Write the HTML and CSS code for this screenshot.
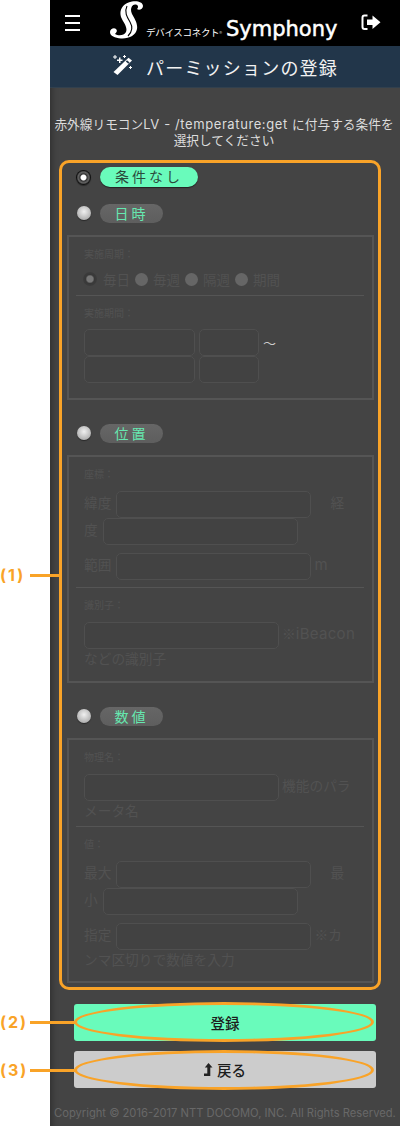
FILE: index.html
```html
<!DOCTYPE html>
<html lang="ja">
<head>
  <meta charset="UTF-8">
  <meta name="viewport" content="width=device-width, initial-scale=1">
  <title>パーミッションの登録</title>
  <link rel="stylesheet" href="styles.css">
</head>
<body>
  <div class="page">
    <header class="topbar">
      <div class="menu"><span></span><span></span><span></span></div>
      <div class="logo">
        <svg class="logo-s" width="34" height="39" viewBox="0 0 34 39">
          <path fill="#fff" d="M22 0.500C27 -0.500 33 1 33 5C33 8 29 10 27 8C29 6 28 3 25 3.500C21 4 20 9 22 13C24 17 28 22 27 28C26 34 19 38 11 37.500C5 37 0 35 0 31C0 28 4 26 6 28C8 30 6 32 5 33C8 35 14 35 16 31C18 26 13 21 11 16C9 10 12 2 22 0.500Z"/>
          <path fill="none" stroke="#000" stroke-width="1.100" d="M17 5C14 11 17 16 20 21C23 26 22 31 18 35"/>
        </svg>
        <span class="logo-sub">デバイスコネクト<small>®</small></span>
        <span class="logo-name">Symphony</span>
      </div>
      <svg class="signout" width="20" height="17" viewBox="0 0 20 17">
        <path fill="none" stroke="#fff" stroke-width="2" d="M6.500 1.500H3.500Q1.500 1.500 1.500 3.500V13Q1.500 15 3.500 15H6.500"/>
        <path fill="#fff" d="M6 5.500H11.500V1.500L19.500 8.300L11.500 15V11H6Z"/>
      </svg>
    </header>
    <div class="titlebar">
      <svg class="wand" width="22" height="22" viewBox="0 0 22 22">
        <path fill="#fff" d="M16.500 3.800L20 6.500L5.500 21L1.500 18Z"/>
        <path fill="#22364a" d="M13.800 7.500L15 6.300L17.600 8.500L16.400 9.700Z"/>
        <path fill="#fff" d="M7 3.500h1.500v2h2V7h-2v2H7V7H5V5.500h2ZM2.500 1h1v1.500H5v1H3.500V5h-1V3.500H1v-1h1.500ZM12 1h1v1h1v1h-1v1h-1V3h-1V2h1ZM18 12h1v1h1v1h-1v1h-1v-1h-1v-1h1Z"/>
      </svg>
      <h1>パーミッションの登録</h1>
    </div>

    <main class="content">
      <p class="lead">赤外線リモコン<span class="lead-en">LV - /temperature:get </span>に付与する条件を<br>選択してください</p>

      <div class="cond cond-first">
        <span class="radio radio-on"></span>
        <span class="pill pill-on">条件なし</span>
      </div>

      <div class="cond cond-second">
        <span class="radio"></span>
        <span class="pill">日時</span>
      </div>
      <div class="box box-time">
        <div class="cap">実施周期：</div>
        <div class="cycle">
          <span class="mini mini-on"></span><span>毎日</span>
          <span class="mini"></span><span>毎週</span>
          <span class="mini"></span><span>隔週</span>
          <span class="mini"></span><span>期間</span>
        </div>
        <hr>
        <div class="cap">実施期間：</div>
        <div class="dates">
          <div class="date-row"><span class="field w-date"></span><span class="field w-time"></span><span class="tilde">〜</span></div>
          <div class="date-row"><span class="field w-date"></span><span class="field w-time"></span></div>
        </div>
      </div>

      <div class="cond">
        <span class="radio"></span>
        <span class="pill">位置</span>
      </div>
      <div class="box box-place">
        <div class="cap">座標：</div>
        <p class="line">緯度<span class="field w-long"></span><span class="gap"></span>経度<span class="field w-long"></span></p>
        <p class="line line-next">範囲<span class="field w-long"></span> <span class="en">m</span></p>
        <hr>
        <div class="cap">識別子：</div>
        <p class="line"><span class="field w-long field-first"></span> ※<span class="en">iBeacon</span>などの識別子</p>
      </div>

      <div class="cond">
        <span class="radio"></span>
        <span class="pill">数値</span>
      </div>
      <div class="box box-value">
        <div class="cap">物理名：</div>
        <p class="line"><span class="field w-long field-first"></span> 機能のパラメータ名</p>
        <hr>
        <div class="cap">値：</div>
        <p class="line">最大<span class="field w-long"></span><span class="gap"></span>最小<span class="field w-long"></span></p>
        <p class="line line-next">指定<span class="field w-long"></span> ※カ<br>ンマ区切りで数値を入力</p>
      </div>

      <button class="btn btn-ok">登録</button>
      <button class="btn btn-back">
        <svg width="9" height="13" viewBox="0 0 9 13"><path fill="#222" d="M4.500 0L8.500 4.500H6.300V13H0V10.500H3.300V4.500H0.800Z"/></svg>
        戻る
      </button>
    </main>

    <footer class="copy">Copyright © 2016-2017 NTT DOCOMO, INC. All Rights Reserved.</footer>
  </div>

  <!-- annotations on top of the screenshot -->
  <div class="mark-box"></div>
  <div class="mark-oval oval-ok"></div>
  <div class="mark-oval oval-back"></div>
  <div class="callout call-1"><b>(1)</b><i></i></div>
  <div class="callout call-2"><b>(2)</b><i></i></div>
  <div class="callout call-3"><b>(3)</b><i></i></div>
</body>
</html>
```

FILE: styles.css
```css
* {
  box-sizing: border-box;
}

body {
  margin: 0;
  background: #fff;
  font-family: "Inter", "Noto Sans CJK JP", sans-serif;
  position: relative;
  height: 1126px;
  overflow: hidden;
}

.page {
  margin-left: 50px;
  width: 350px;
  height: 1126px;
  background: #444;
  box-shadow: inset 7px 0 6px -5px rgba(0, 0, 0, 0.3);
  display: flex;
  flex-direction: column;
}

.topbar {
  height: 46px;
  background: #000;
  display: flex;
  align-items: flex-start;
  flex: none;
}

.menu {
  margin: 15px 0 0 15px;
  width: 15px;
  display: flex;
  flex-direction: column;
  gap: 5px;
}

.menu span {
  height: 2px;
  background: #fff;
}

.logo {
  margin-left: 30px;
  height: 46px;
  display: flex;
  align-items: flex-start;
}

.logo-s {
  flex: none;
  margin-top: 1px;
}

.logo-sub {
  flex: none;
  margin: 24px 0 0 2px;
  color: #fff;
  font-family: "Noto Sans CJK JP", sans-serif;
  font-size: 9.500px;
  line-height: 16px;
  letter-spacing: -0.300px;
  white-space: nowrap;
  width: 80px;
}

.logo-sub small {
  font-size: 6px;
  color: #bbb;
}

.logo-name {
  flex: none;
  margin: 15px 0 0 0;
  color: #fff;
  font-family: "DejaVu Sans", sans-serif;
  font-size: 21px;
  line-height: 28px;
  -webkit-text-stroke: 0.500px #fff;
  white-space: nowrap;
}

.signout {
  margin: 14px 19px 0 auto;
}

.titlebar {
  height: 42px;
  background: #22364a;
  border-bottom: 1px solid #31404e;
  display: flex;
  align-items: center;
  justify-content: center;
  gap: 12px;
  flex: none;
}

.titlebar h1 {
  margin: 0;
  color: #f2f2f2;
  font-family: "Noto Sans CJK JP", sans-serif;
  font-size: 18px;
  font-weight: 400;
  letter-spacing: 1.200px;
}

.wand {
  margin-bottom: 4px;
}

.content {
  flex: 1;
  padding: 28px 0 0 17px;
}

.lead {
  margin: 0 0 0 -14px;
  width: 342px;
  height: 32px;
  color: #ddd;
  font-size: 12.700px;
  line-height: 16px;
  text-align: center;
  white-space: nowrap;
}

.lead-en {
  font-size: 13px;
  letter-spacing: 0.600px;
}

.cond {
  display: flex;
  align-items: center;
  gap: 9px;
  height: 20px;
  margin: 23px 0 12px 10px;
}

.cond-first {
  margin: 19px 0 0 9px;
}

.cond-second {
  margin-top: 16px;
}

.radio {
  width: 14px;
  height: 14px;
  border-radius: 50%;
  background: radial-gradient(circle at 50% 40%, #f0f0f0, #999);
  box-shadow: 0 1px 1px rgba(0, 0, 0, 0.4);
}

.radio-on {
  width: 15px;
  height: 15px;
  background: radial-gradient(circle, #fff 0 2.500px, #333 3.500px, #666 5.500px, #111 7px);
}

.pill {
  width: 63px;
  height: 19px;
  border-radius: 10px;
  background: linear-gradient(#666, #5e5e5e);
  color: #66e8b0;
  font-size: 14px;
  line-height: 19px;
  letter-spacing: 3px;
  text-align: center;
}

.pill-on {
  width: 98px;
  height: 20px;
  background: #69fbbb;
  color: #2b4a3c;
  box-shadow: 0 1px 1px rgba(0, 0, 0, 0.5);
}

.box {
  width: 307px;
  border: 2px solid #555;
  padding: 0 8px 0 7px;
}

.box-time {
  height: 165px;
}

.box-place {
  height: 228px;
}

.box-value {
  height: 245px;
}

.cap {
  margin: 10px 0 0 8px;
  color: #525252;
  font-size: 10px;
  line-height: 14px;
}

.cycle {
  margin: 9px 0 0 7px;
  display: flex;
  align-items: center;
  height: 18px;
  color: #525252;
  font-size: 13.500px;
}

.cycle span + span {
  margin-right: 5px;
}

.mini {
  width: 13px;
  height: 13px;
  margin-right: 5px;
  border-radius: 50%;
  background: #666;
}

.mini-on {
  width: 14px;
  height: 14px;
  margin-right: 6px;
  background: radial-gradient(circle, #777 0 3px, #383838 4.500px, #3c3c3c 7px);
}

hr {
  margin: 7px 0 0 0;
  border: 0;
  border-top: 1px solid #555;
}

.dates {
  margin: 9px 0 0 8px;
}

.date-row {
  display: flex;
  gap: 4px;
  height: 27px;
}

.field {
  display: inline-block;
  height: 27px;
  margin: 0 5px 0 5px;
  border: 1px solid #4f4f4f;
  border-radius: 5px;
  background: #424242;
  vertical-align: middle;
}

.date-row .field {
  margin: 0;
}

.field-first {
  margin-left: 0;
  margin-right: 0;
}

.w-date {
  width: 111px;
}

.w-time {
  width: 60px;
}

.w-long {
  width: 195px;
}

.tilde {
  color: #ccc;
  font-family: "Noto Sans CJK JP", sans-serif;
  font-size: 13px;
  line-height: 27px;
}

.line {
  margin: 10px 0 0 8px;
  width: 272px;
  color: #525252;
  font-family: "Noto Sans CJK JP", sans-serif;
  font-size: 13.700px;
  line-height: 18px;
}

.en {
  font-family: "Inter", sans-serif;
  font-size: 15px;
  letter-spacing: 0.300px;
  line-height: 1;
}

.line .gap + .field,
.line-next .field {
  margin-right: 0;
}

.line-next {
  margin-top: 8px;
}

.gap {
  display: inline-block;
  width: 14px;
}

.btn {
  display: block;
  width: 302px;
  height: 37px;
  margin-left: 7px;
  border: 0;
  border-radius: 3px;
  font-family: inherit;
  font-size: 14.500px;
  font-weight: 500;
  color: #1c1c1c;
}

.btn-ok {
  margin-top: 21px;
  background: #69fbbb;
}

.btn-back {
  margin-top: 10px;
  background: #ccc;
}

.copy {
  color: #686868;
  font-size: 11.200px;
  line-height: 14px;
  padding: 0 0 6px 4px;
  white-space: nowrap;
}

/* annotations */
.mark-box {
  position: absolute;
  left: 59px;
  top: 160px;
  width: 322px;
  height: 830px;
  border: 3px solid #f9a328;
  border-radius: 10px;
}

.mark-oval {
  position: absolute;
  left: 74px;
  width: 300px;
  height: 40px;
  border: 3px solid #f9a328;
  border-radius: 50%;
}

.oval-ok {
  top: 1002px;
}

.oval-back {
  top: 1050px;
}

.callout {
  position: absolute;
  left: 0;
  display: flex;
  align-items: center;
  color: #f9a328;
  height: 18px;
}

.callout b {
  font-size: 16px;
  width: 30px;
  white-space: nowrap;
  letter-spacing: 2px;
}

.callout i {
  display: block;
  height: 3px;
  background: #f9a328;
}

.call-1 {
  top: 566px;
}

.call-1 i {
  width: 30px;
}

.call-2 {
  top: 1013px;
}

.call-3 {
  top: 1061px;
}

.call-2 i,
.call-3 i {
  width: 45px;
}
```
